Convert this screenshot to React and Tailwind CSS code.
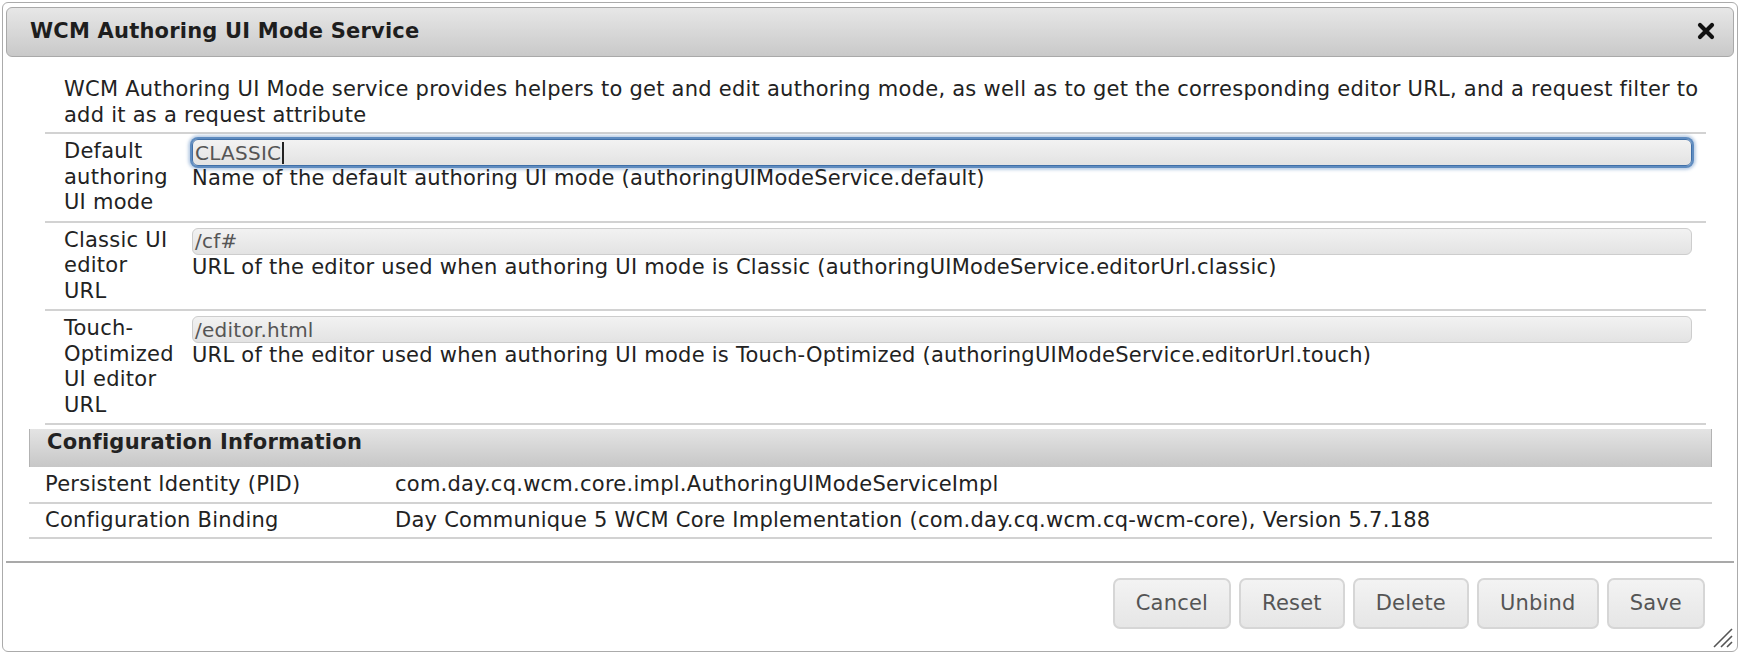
import React from "react";

const font = { fontFamily: '"DejaVu Sans", Verdana, sans-serif' };

function Field({ value, focused }) {
  return (
    <div
      className={
        "h-[27px] rounded-[6px] border flex items-center pl-[2px] text-[20px] text-[#555] bg-gradient-to-b from-[#f2f2f2] to-[#e3e3e3] " +
        (focused
          ? "border-[#3f6fa8] shadow-[0_0_0_2px_#5f8cc0,0_0_3px_4px_rgba(110,150,200,0.45)]"
          : "border-[#cdcdcd]")
      }
    >
      <span className="leading-none">{value}</span>
      {focused && <span className="w-[1.5px] h-[22px] bg-[#222] ml-[1px]" />}
    </div>
  );
}

function Row({ label, value, desc, focused }) {
  return (
    <div className="flex border-t-2 border-[#d2d2d2] pt-[5px] pb-[5px]">
      <div className="w-[147px] shrink-0 pl-[19px] leading-[25.5px] whitespace-nowrap">{label}</div>
      <div className="flex-1 pr-[14px]">
        <Field value={value} focused={focused} />
        <div className="leading-[25.5px] whitespace-nowrap">{desc}</div>
      </div>
    </div>
  );
}

function Btn({ children }) {
  return (
    <button className="h-[51px] px-[21px] rounded-[7px] border-2 border-[#d6d6d6] bg-gradient-to-b from-[#f3f3f3] to-[#e6e6e6] text-[21px] tracking-[0.2px] text-[#555] leading-none">
      {children}
    </button>
  );
}

export default function App() {
  return (
    <div className="w-[1740px] h-[654px] bg-white p-[2px] text-[#222] text-[21px] tracking-[0.25px]" style={font}>
      <div className="relative h-[650px] border border-[#ababab] rounded-[6px] px-[3px] pt-[4px] flex flex-col">
        {/* Title bar */}
        <div className="h-[50px] shrink-0 rounded-[6px] border border-[#a9a9a9] bg-gradient-to-b from-[#e7e7e7] to-[#c9c9c9] flex items-center justify-between pl-[23px] pr-[18px]">
          <span className="font-bold text-[21px] tracking-[0.2px] text-[#1e1e1e] leading-none pb-[2px]">
            WCM Authoring UI Mode Service
          </span>
          <svg width="18" height="18" viewBox="0 0 18 18" className="mb-[2px]">
            <path d="M3 3 L15 15 M15 3 L3 15" stroke="#111" strokeWidth="4.2" strokeLinecap="round" />
          </svg>
        </div>

        {/* Form */}
        <div className="ml-[39px] mr-[28px] mt-[20px]">
          <div className="pl-[19px] pb-[4px] leading-[25.5px] whitespace-nowrap">
            WCM Authoring UI Mode service provides helpers to get and edit authoring mode, as well as to get the corresponding editor URL, and a request filter to
            <br />
            add it as a request attribute
          </div>
          <Row
            label={<>Default<br />authoring<br />UI mode</>}
            value="CLASSIC"
            focused
            desc="Name of the default authoring UI mode (authoringUIModeService.default)"
          />
          <Row
            label={<>Classic UI<br />editor<br />URL</>}
            value="/cf#"
            desc="URL of the editor used when authoring UI mode is Classic (authoringUIModeService.editorUrl.classic)"
          />
          <Row
            label={<>Touch-<br />Optimized<br />UI editor<br />URL</>}
            value="/editor.html"
            desc="URL of the editor used when authoring UI mode is Touch-Optimized (authoringUIModeService.editorUrl.touch)"
          />
          <div className="border-t-2 border-[#d2d2d2]" />
        </div>

        {/* Configuration Information */}
        <div className="ml-[23px] mr-[22px] mt-[4px]">
          <div className="h-[38px] border-x border-[#b3b3b3] bg-gradient-to-b from-[#e4e4e4] to-[#c7c7c7] pl-[17px] pt-[1px] font-bold leading-[25.5px]">
            Configuration Information
          </div>
          <div className="flex border-b-2 border-[#d2d2d2] pt-[5px] pb-[4px] leading-[25.5px]">
            <div className="w-[366px] shrink-0 pl-[16px]">Persistent Identity (PID)</div>
            <div>com.day.cq.wcm.core.impl.AuthoringUIModeServiceImpl</div>
          </div>
          <div className="flex border-b-2 border-[#d2d2d2] pt-[4px] pb-[4px] leading-[25.5px]">
            <div className="w-[366px] shrink-0 pl-[16px]">Configuration Binding</div>
            <div>Day Communique 5 WCM Core Implementation (com.day.cq.wcm.cq-wcm-core), Version 5.7.188</div>
          </div>
        </div>

        {/* Footer */}
        <div className="mt-[22px] border-t-2 border-[#a9a9a9] flex justify-end gap-[8px] pt-[15px] pr-[29px]">
          <Btn>Cancel</Btn>
          <Btn>Reset</Btn>
          <Btn>Delete</Btn>
          <Btn>Unbind</Btn>
          <Btn>Save</Btn>
        </div>

        {/* resize grip */}
        <svg width="24" height="24" viewBox="0 0 24 24" className="absolute right-[3px] bottom-[2px]">
          <path d="M22 4 L4 22 M22 11 L11 22 M22 17 L17 22" stroke="#555" strokeWidth="1.6" />
        </svg>
      </div>
    </div>
  );
}
